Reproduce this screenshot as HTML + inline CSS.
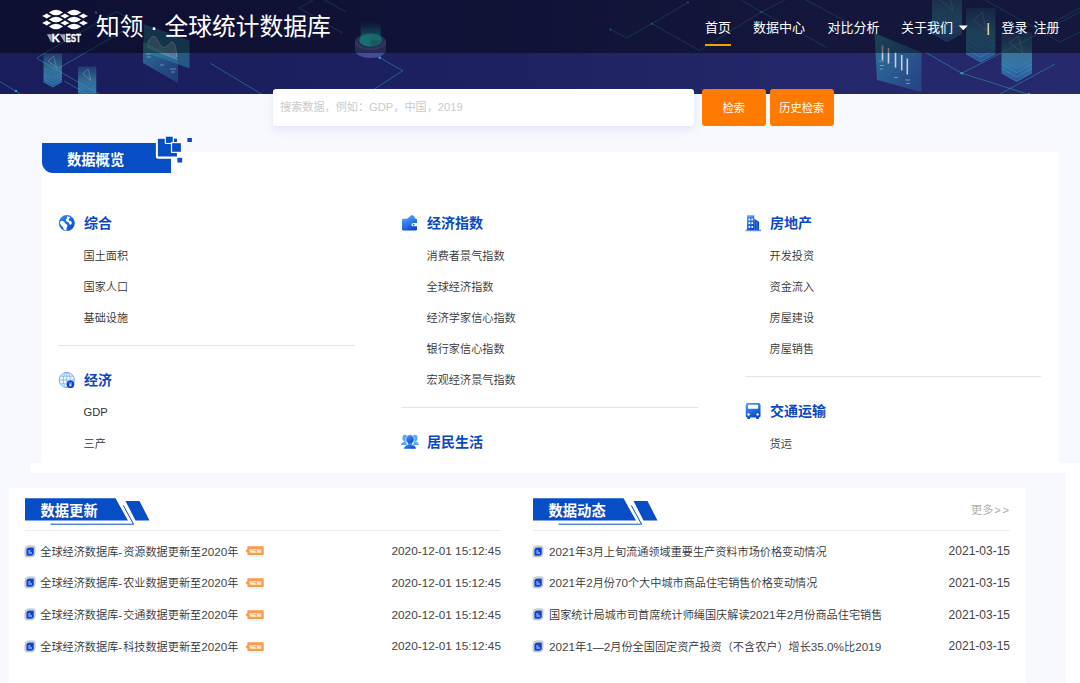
<!DOCTYPE html>
<html lang="zh-CN">
<head>
<meta charset="utf-8">
<title>知领 · 全球统计数据库</title>
<style>
*{box-sizing:border-box;margin:0;padding:0}
html,body{width:1080px;height:683px;overflow:hidden;background:#fff}
body{position:relative;font-family:"Liberation Sans","Noto Sans CJK SC",sans-serif;color:#333;font-size:11.15px}
.abs{position:absolute}
.l{font-size:11.7px;color:#444}
#bgA{left:0;top:94px;width:1080px;height:369px;background:#f8f9fe}
#bgB{left:0;top:463px;width:30px;height:10px;background:#f8f9fe}
#bgC{left:0;top:473px;width:1066px;height:210px;background:#f8f9fe}
#panel1{left:42px;top:152px;width:1017px;height:311px;background:#fff}
#panel2{left:9px;top:488px;width:1017px;height:195px;background:#fff}
#banner{left:0;top:0;width:1080px;height:94px;background:linear-gradient(90deg,#1a1d5c 0%,#1d2161 45%,#24286a 75%,#262a6c 100%);overflow:hidden}
#nav{left:0;top:0;width:1080px;height:53px;background:rgba(0,0,0,.44)}
#title{left:96px;top:9px;height:36px;line-height:36px;font-size:23.75px;color:#fff;font-weight:400;white-space:nowrap}
.nv{top:16px;height:24px;line-height:24px;font-size:13px;color:#fff;white-space:nowrap}
#uline{left:705px;top:43.5px;width:26px;height:2px;background:#f5a200}
#sbox{left:273px;top:89px;width:420.5px;height:36.5px;background:#fff;border-radius:3px;box-shadow:0 4px 10px rgba(90,130,190,.15)}
#sbox span{position:absolute;left:7px;top:0;line-height:37px;color:#cacaca;font-size:11.15px;white-space:nowrap}
.btn{top:89px;width:63.5px;height:36.5px;background:#ff7a00;border-radius:3px;color:#fff;text-align:center;line-height:38px;font-size:11.25px}
#tab1{left:42px;top:143px;width:129px;height:30px;background:#064dc6;border-radius:0 0 0 11px}
#tab1t{left:67px;top:148.5px;height:22px;line-height:22px;color:#fff;font-weight:bold;font-size:14.3px;white-space:nowrap}
.h{height:20px;line-height:20px;font-size:14px;font-weight:bold;color:#0a48c3;white-space:nowrap}
.it{height:16px;line-height:16px;font-size:11.15px;color:#333;white-space:nowrap;font-weight:350}
.hr{height:1px;background:#e4e4e4}
.row{height:16px;line-height:16px;white-space:nowrap;color:#333;font-weight:350}
.date{text-align:right;width:130px;font-size:11.8px;height:16px;line-height:16px;color:#444}
.sech{color:#fff;font-weight:bold;font-size:14.3px;line-height:22px;height:22px;white-space:nowrap}
</style>
</head>
<body>
<div class="abs" id="bgA"></div>
<div class="abs" id="bgB"></div>
<div class="abs" id="bgC"></div>
<div class="abs" id="panel1"></div>
<div class="abs" id="panel2"></div>

<!-- HEADER -->
<div class="abs" id="banner">
<svg id="deco" class="abs" style="left:0;top:0" width="1080" height="94" viewBox="0 0 1080 94">
<defs>
<linearGradient id="sg" x1="0" y1="0" x2="0" y2="1"><stop offset="0" stop-color="#3aa5b8" stop-opacity="0.22"/><stop offset="0.45" stop-color="#48b0c0" stop-opacity="0.55"/><stop offset="0.7" stop-color="#3a8fc0" stop-opacity="0.7"/><stop offset="1" stop-color="#2c62a8" stop-opacity="0.75"/></linearGradient>
<linearGradient id="pg" x1="0" y1="0" x2="1" y2="1"><stop offset="0" stop-color="#33a3b2" stop-opacity="0.8"/><stop offset="1" stop-color="#2a62a8" stop-opacity="0.5"/></linearGradient>
<linearGradient id="ug" x1="0" y1="0" x2="0" y2="1"><stop offset="0" stop-color="#2bc4c8" stop-opacity="0"/><stop offset="1" stop-color="#2bc4c8" stop-opacity=".75"/></linearGradient>
</defs>
<g fill="none" stroke="#2fb5c4" stroke-width="0.8" stroke-opacity=".55" stroke-linejoin="round">
<path d="M38 57L116.7 11.5L136.6 23.1L57.8 68.6Q56.1 69.6 54.4 68.6L38 59.1Q36.2 58 38 57Z"/>
<path d="M56.1 69.6L100 94.5M64.4 81.2L88 94.5"/>
<path d="M0 81.5L20.5 94"/>
<path d="M210.4 63.3L262 94.4"/>
<path d="M379.6 57.5L402.7 70.8L374.8 88.9L366 94"/>
<path d="M313 0L299.3 8L342.2 33M324.4 0L346 11.9"/>
<path d="M610.4 29.6L626.7 37.9L651.9 23.7L688 2.4M651.9 23.7L699.3 50.4L761.5 11.9L785 0M740.7 0L761.5 11.9L826.7 47.4M806 0L856 26.7"/>
<path d="M961.8 73.3L1080 12M961.8 73.3L1029 94.5M925 52L961.8 73.3"/>
<path d="M1000 94L1055 64M1040 30L1080 8"/>
<path d="M985 0L1060 42L1080 32"/>
</g>
<g fill="#2fc0cc" fill-opacity=".8"><circle cx="16" cy="91" r="1.2"/><circle cx="96" cy="12.5" r="1.2"/><circle cx="379.6" cy="57.6" r="1.3"/><circle cx="961.8" cy="73.3" r="1.3"/><circle cx="610.4" cy="29.6" r="1"/><circle cx="651.9" cy="23.7" r="1"/><circle cx="688" cy="2.4" r="1"/><circle cx="761.5" cy="11.9" r="1"/><circle cx="1029" cy="94" r="1.2"/></g>
<g opacity="1"><path d="M43.5 53.5H62V81.8L52.75 87L43.5 81.8Z" fill="url(#sg)"/><path d="M43.5 81.8L52.75 87L62 81.8" fill="none" stroke="#4db6d6" stroke-opacity="0.5" stroke-width="0.8"/><path d="M43.5 78.8L52.75 84L62 78.8" fill="none" stroke="#4db6d6" stroke-opacity="0.42" stroke-width="0.8"/><path d="M43.5 75.8L52.75 81L62 75.8" fill="none" stroke="#4db6d6" stroke-opacity="0.34" stroke-width="0.8"/><path d="M43.5 72.8L52.75 78L62 72.8" fill="none" stroke="#4db6d6" stroke-opacity="0.26" stroke-width="0.8"/><path d="M48.1 60.9L53.7 56.2L56.5 67.6L48.1 60.9" fill="none" stroke="#c9d6e6" stroke-opacity=".55" stroke-width="0.5"/></g><g opacity="1"><path d="M78 66.5H96.3V93.9L87.15 99L78 93.9Z" fill="url(#sg)"/><path d="M78 93.9L87.15 99L96.3 93.9" fill="none" stroke="#4db6d6" stroke-opacity="0.5" stroke-width="0.8"/><path d="M78 91L87.15 96.1L96.3 91" fill="none" stroke="#4db6d6" stroke-opacity="0.42" stroke-width="0.8"/><path d="M78 88L87.15 93.2L96.3 88" fill="none" stroke="#4db6d6" stroke-opacity="0.34" stroke-width="0.8"/><path d="M78 85.1L87.15 90.2L96.3 85.1" fill="none" stroke="#4db6d6" stroke-opacity="0.26" stroke-width="0.8"/><path d="M82.6 73.7L88.1 69.1L90.8 80.2L82.6 73.7" fill="none" stroke="#c9d6e6" stroke-opacity=".55" stroke-width="0.5"/></g><path d="M143.7 24L189.6 40.4V68.5L143.7 52Z" fill="#2f93a8" opacity=".5"/><path d="M143 42L178 59V83L143 63Z" fill="url(#pg)" opacity=".8"/><path d="M147 44Q153 30 158 41T169 44T177 57L177 60L147 48Z" fill="#cfe2f5" fill-opacity=".25"/><path d="M147 44Q153 30 158 41T169 44T177 57" fill="none" stroke="#bfe6f2" stroke-opacity=".5" stroke-width="0.8"/><path d="M146 54h5M147 57h4M160 65h4M170 69h6M171 72h4" stroke="#d7ecf7" stroke-opacity=".6" stroke-width="0.7"/><path d="M355 42V50A15.5 8 0 0 0 386 50V42Z" fill="#4b54a6" fill-opacity=".85"/><ellipse cx="370.5" cy="42" rx="15.5" ry="8" fill="#6068b4" fill-opacity=".8"/><ellipse cx="370.5" cy="41" rx="13" ry="7" fill="#3c4590" fill-opacity=".9"/><ellipse cx="370.7" cy="40.2" rx="11.5" ry="6.6" fill="#2bc4c8"/><path d="M370.7 33.6A11.5 6.6 0 0 1 370.7 46.8Z" fill="#2f8f9a" fill-opacity=".6"/><path d="M360.7 22H380.7V40H360.7Z" fill="url(#ug)"/><path d="M874.5 33L921.5 52.5V92L877 80Z" fill="url(#pg)" opacity=".85"/><path d="M882.5 45.5V60" stroke="#e6dff0" stroke-opacity=".85" stroke-width="1.6"/><path d="M888.5 48V63.5" stroke="#e6dff0" stroke-opacity=".85" stroke-width="1.6"/><path d="M895.5 52.5V67.5" stroke="#e6dff0" stroke-opacity=".85" stroke-width="1.6"/><path d="M901.7 55V70.5" stroke="#e6dff0" stroke-opacity=".85" stroke-width="1.6"/><path d="M907.3 58.5V74.5" stroke="#e6dff0" stroke-opacity=".85" stroke-width="1.6"/><path d="M879 61h5M880 65.5h4M880 69h3M894 77.5h4M905 80h5M906 83.5h4" stroke="#d7ecf7" stroke-opacity=".6" stroke-width="0.7"/><g opacity="0.9"><path d="M932 -12H962V33.3L947 41.7L932 33.3Z" fill="url(#sg)"/><path d="M932 33.3L947 41.7L962 33.3" fill="none" stroke="#4db6d6" stroke-opacity="0.5" stroke-width="0.8"/><path d="M932 28.5L947 36.9L962 28.5" fill="none" stroke="#4db6d6" stroke-opacity="0.42" stroke-width="0.8"/><path d="M932 23.6L947 32L962 23.6" fill="none" stroke="#4db6d6" stroke-opacity="0.34" stroke-width="0.8"/><path d="M932 18.8L947 27.2L962 18.8" fill="none" stroke="#4db6d6" stroke-opacity="0.26" stroke-width="0.8"/><path d="M939.5 -0.2L948.5 -7.7L953 10.6L939.5 -0.2" fill="none" stroke="#c9d6e6" stroke-opacity=".55" stroke-width="0.5"/></g><g opacity="0.95"><path d="M966 8H995.4V53.8L980.7 62L966 53.8Z" fill="url(#sg)"/><path d="M966 53.8L980.7 62L995.4 53.8" fill="none" stroke="#4db6d6" stroke-opacity="0.5" stroke-width="0.8"/><path d="M966 48.9L980.7 57.1L995.4 48.9" fill="none" stroke="#4db6d6" stroke-opacity="0.42" stroke-width="0.8"/><path d="M966 44L980.7 52.3L995.4 44" fill="none" stroke="#4db6d6" stroke-opacity="0.34" stroke-width="0.8"/><path d="M966 39.2L980.7 47.4L995.4 39.2" fill="none" stroke="#4db6d6" stroke-opacity="0.26" stroke-width="0.8"/><path d="M973.4 19.9L982.2 12.3L986.6 30.7L973.4 19.9" fill="none" stroke="#c9d6e6" stroke-opacity=".55" stroke-width="0.5"/></g><g opacity="1"><path d="M1001.5 32H1032V73L1016.75 81.5L1001.5 73Z" fill="url(#sg)"/><path d="M1001.5 73L1016.75 81.5L1032 73" fill="none" stroke="#4db6d6" stroke-opacity="0.5" stroke-width="0.8"/><path d="M1001.5 68.5L1016.75 77L1032 68.5" fill="none" stroke="#4db6d6" stroke-opacity="0.42" stroke-width="0.8"/><path d="M1001.5 64L1016.75 72.6L1032 64" fill="none" stroke="#4db6d6" stroke-opacity="0.34" stroke-width="0.8"/><path d="M1001.5 59.6L1016.75 68.1L1032 59.6" fill="none" stroke="#4db6d6" stroke-opacity="0.26" stroke-width="0.8"/><path d="M1009.1 42.9L1018.3 36L1022.9 52.8L1009.1 42.9" fill="none" stroke="#c9d6e6" stroke-opacity=".55" stroke-width="0.5"/></g></svg>
</div>
<div class="abs" id="nav"></div>
<svg id="logo" class="abs" style="left:40px;top:8px" width="52" height="38" viewBox="40 8 52 38">
<path d="M48.9 12.5Q56 7 63.1 12.5Q56 18 48.9 12.5ZM67 12.5Q74.1 7 81.2 12.5Q74.1 18 67 12.5ZM48.9 19.5Q56 14 63.1 19.5Q56 25 48.9 19.5ZM67 19.5Q74.1 14 81.2 19.5Q74.1 25 67 19.5ZM48.9 26.6Q56 21.1 63.1 26.6Q56 32.1 48.9 26.6ZM67 26.6Q74.1 21.1 81.2 26.6Q74.1 32.1 67 26.6ZM42.1 16Q45.09 14.62 46.7 13.5Q48.31 14.62 51.3 16Q48.31 17.38 46.7 18.5Q45.09 17.38 42.1 16ZM60.3 16Q63.29 14.62 64.9 13.5Q66.51 14.62 69.5 16Q66.51 17.38 64.9 18.5Q63.29 17.38 60.3 16ZM78.8 16Q81.79 14.62 83.4 13.5Q85.01 14.62 88 16Q85.01 17.38 83.4 18.5Q81.79 17.38 78.8 16ZM42.1 23.1Q45.09 21.73 46.7 20.6Q48.31 21.73 51.3 23.1Q48.31 24.48 46.7 25.6Q45.09 24.48 42.1 23.1ZM60.3 23.1Q63.29 21.73 64.9 20.6Q66.51 21.73 69.5 23.1Q66.51 24.48 64.9 25.6Q63.29 24.48 60.3 23.1ZM78.8 23.1Q81.79 21.73 83.4 20.6Q85.01 21.73 88 23.1Q85.01 24.48 83.4 25.6Q81.79 24.48 78.8 23.1Z" fill="#fff"/>
<path d="M47 34.2H51.6V41.8H50.8Z" fill="#fff" opacity=".62"/>
<path d="M59.6 34.2H65V41.8H64.2Z" fill="#fff" opacity=".62"/>
<g font-family="Liberation Sans, sans-serif" font-weight="bold" fill="#fff" stroke="#fff" stroke-width="0.3" font-size="10.5">
<text x="51.4" y="41.8" textLength="8.4" lengthAdjust="spacingAndGlyphs">K</text>
<text x="65.4" y="41.8" textLength="15.6" lengthAdjust="spacingAndGlyphs">EST</text>
</g>
</svg>
<div class="abs" id="title">知领 · 全球统计数据库</div>
<div class="abs nv" style="left:705px">首页</div>
<div class="abs nv" style="left:753px">数据中心</div>
<div class="abs nv" style="left:827.5px">对比分析</div>
<div class="abs nv" style="left:901px">关于我们</div>
<svg class="abs" style="left:958px;top:25px" width="11" height="6" viewBox="0 0 11 6"><path d="M0.8 0.6h9L5.3 5.3z" fill="#fff"/></svg>
<div class="abs nv" style="left:986.5px">|</div>
<div class="abs nv" style="left:1001.5px">登录</div>
<div class="abs nv" style="left:1033.5px">注册</div>
<div class="abs" id="uline"></div>

<!-- SEARCH -->
<div class="abs" id="sbox"><span>搜索数据，例如：GDP，中国，2019</span></div>
<div class="abs btn" style="left:702px">检索</div>
<div class="abs btn" style="left:770px">历史检索</div>

<!-- TAB -->
<div class="abs" id="tab1"></div>
<div class="abs" id="tab1t">数据概览</div>
<svg id="pix" class="abs" style="left:150px;top:130px" width="50" height="40" viewBox="150 130 50 40">
<g fill="#064dc6">
<rect x="155.9" y="137" width="23" height="21.7" rx="2" fill="#fff"/>
<rect x="157.9" y="138.8" width="19" height="17.8" rx="0.4"/>
<rect x="164.7" y="135.5" width="9.2" height="8.6" rx="1" fill="#fff"/>
<rect x="165.9" y="136.7" width="6.8" height="6.2"/>
<rect x="170.9" y="142" width="11.2" height="11" rx="1" fill="#fff"/>
<rect x="172.1" y="143.2" width="8.8" height="8.6"/>
<rect x="174" y="138.8" width="2.9" height="2.6"/>
<rect x="187.4" y="138" width="4.5" height="4"/>
<rect x="177.4" y="157.8" width="4.8" height="4.7"/>
</g></svg>

<!-- CATEGORIES -->
<div id="cats" class="abs" style="left:0;top:152px;width:1080px;height:296.7px;overflow:hidden"><div class="abs" style="left:0;top:-152px;width:1080px;height:600px">
<div class="abs h" style="left:84px;top:213.40px">综合</div>
<div class="abs it" style="left:83.6px;top:248.10px">国土面积</div>
<div class="abs it" style="left:83.6px;top:279.04px">国家人口</div>
<div class="abs it" style="left:83.6px;top:309.98px">基础设施</div>
<div class="abs hr" style="left:58px;top:345px;width:297px"></div>
<div class="abs h" style="left:84px;top:370.40px">经济</div>
<div class="abs it" style="left:83.6px;top:404.10px">GDP</div>
<div class="abs it" style="left:83.6px;top:436.04px">三产</div>
<div class="abs h" style="left:427px;top:213.40px">经济指数</div>
<div class="abs it" style="left:426.6px;top:248.10px">消费者景气指数</div>
<div class="abs it" style="left:426.6px;top:279.04px">全球经济指数</div>
<div class="abs it" style="left:426.6px;top:309.98px">经济学家信心指数</div>
<div class="abs it" style="left:426.6px;top:340.92px">银行家信心指数</div>
<div class="abs it" style="left:426.6px;top:371.86px">宏观经济景气指数</div>
<div class="abs hr" style="left:401px;top:407px;width:297px"></div>
<div class="abs h" style="left:427px;top:432.40px">居民生活</div>
<div class="abs h" style="left:770px;top:213.40px">房地产</div>
<div class="abs it" style="left:769.6px;top:248.10px">开发投资</div>
<div class="abs it" style="left:769.6px;top:279.04px">资金流入</div>
<div class="abs it" style="left:769.6px;top:309.98px">房屋建设</div>
<div class="abs it" style="left:769.6px;top:340.92px">房屋销售</div>
<div class="abs hr" style="left:745px;top:376px;width:296px"></div>
<div class="abs h" style="left:770px;top:401.10px">交通运输</div>
<div class="abs it" style="left:769.6px;top:435.80px">货运</div>
</div></div>
<svg class="abs" style="left:0;top:0;pointer-events:none" width="1080" height="470" viewBox="0 0 1080 470">
<defs>
<linearGradient id="g1" x1="0" y1="0" x2="1" y2="1"><stop offset="0" stop-color="#2f8df6"/><stop offset="1" stop-color="#0846cf"/></linearGradient>
<linearGradient id="g2" x1="0" y1="0" x2="0.6" y2="1"><stop offset="0" stop-color="#4fa3f8"/><stop offset="1" stop-color="#0a49d0"/></linearGradient>
</defs>
<!-- globe -->
<g transform="translate(66.8 223.1)">
<circle r="8" fill="url(#g1)"/>
<path d="M-6.9 -1.2C-6.2 -2 -5 -2.4 -3.8 -2C-2.6 -1.6 -2.4 -0.4 -1.4 0.4C-0.4 1.2 0.6 1.6 0.6 2.8C0.6 4 -0.4 4.6 -0.4 5.6C-0.4 6.4 0 7 0.4 7.4C-1 7.4 -2.2 7 -3.2 6.2C-3.2 5 -3.8 4 -4.6 3.2C-5.6 2.2 -6.9 0.8 -6.9 -1.2Z" fill="#fff"/>
<path d="M0.2 -6.6C1.4 -6.8 2.6 -6.4 3.6 -5.8C3 -5 2 -4.8 1.8 -3.8C1.6 -2.8 2.6 -2.4 3.4 -2C4.4 -1.6 5.2 -1 5 0.2C4.8 1.4 3.8 2 3 1.4C2.2 0.8 2.4 -0.2 1.6 -0.8C0.8 -1.4 -0.4 -1.4 -0.8 -2.4C-1.2 -3.4 -0.4 -4.2 0.2 -4.8C0.6 -5.4 0 -6 0.2 -6.6Z" fill="#fff"/>
</g>
<!-- globe grid + yen -->
<g transform="translate(66.8 380)">
<circle r="7.6" fill="#f1f7ff" stroke="#5ea4f5" stroke-width="0.9"/>
<g fill="none" stroke="#6aaaf5" stroke-width="0.75">
<ellipse rx="3.6" ry="7.6"/><path d="M0 -7.6V7.6M-7.6 0H7.6M-6.6 -3.8H6.6M-6.6 3.8H6.6"/>
</g>
<circle cx="3.6" cy="4.2" r="4.6" fill="#fff"/>
<circle cx="3.6" cy="4.2" r="3.9" fill="#0a45cc"/>
<path d="M2.2 2.2L3.6 4.3L5 2.2M3.6 4.3V6.6M2.3 4.6H4.9M2.3 5.6H4.9" stroke="#fff" stroke-width="0.6" fill="none"/>
</g>
<!-- wallet -->
<g transform="translate(402 215)">
<path d="M4.8 3.9L9.8 0L11.6 0.8L13.6 3.9Z" fill="#3f8ff0"/>
<path d="M0 5Q0 3.7 1.3 3.7H13.7Q15 3.7 15 5V8H11.4Q9.4 8 9.4 9.7Q9.4 11.3 11.4 11.3H15V14.4Q15 15.4 13.7 15.4H1.3Q0 15.4 0 14.4Z" fill="url(#g2)"/>
<circle cx="11.6" cy="9.7" r="0.9" fill="#1a62e0"/>
</g>
<!-- people -->
<g transform="translate(401 434.6)">
<g fill="#5aa9f8">
<ellipse cx="3.9" cy="3.5" rx="2.5" ry="3.3"/>
<path d="M0 10.4C0 8.4 1.6 8 2.8 7.2L5 6.4L6 10.4Z"/>
<ellipse cx="14.1" cy="3.5" rx="2.5" ry="3.3"/>
<path d="M18 10.4C18 8.4 16.4 8 15.2 7.2L13 6.4L12 10.4Z"/>
</g>
<g fill="url(#g2)" stroke="#fff" stroke-width="0.6">
<path d="M2.8 14.5C2.8 11.4 5 10.8 6.6 10C7.4 9.6 7.4 9 7.2 8.4H10.8C10.6 9 10.6 9.6 11.4 10C13 10.8 15.2 11.4 15.2 14.5Z"/>
<ellipse cx="9" cy="4.7" rx="4.2" ry="4.6"/>
</g>
<path d="M7 8.2H11V9.4H7Z" fill="#2f80ea"/>
</g>
<!-- building -->
<g transform="translate(745.5 215)">
<path d="M1.5 0.2H8.8V15H1.5Z" fill="url(#g2)"/>
<path d="M8.8 3.8L13.6 6.8V15H8.8Z" fill="#0b4bd0"/>
<path d="M11.4 5.6V15" stroke="#7fb2f5" stroke-width="0.5"/>
<path d="M0 14.7H15.5V16.2H0Z" fill="#2a6fe3" opacity=".75"/>
<g fill="#fff"><rect x="3" y="3.6" width="1.7" height="1.8"/><rect x="5.9" y="3.6" width="1.7" height="1.8"/><rect x="3" y="7.2" width="1.7" height="1.8"/><rect x="5.9" y="7.2" width="1.7" height="1.8"/><rect x="3" y="11" width="1.7" height="1.8"/><rect x="5.9" y="11" width="1.7" height="1.8"/></g>
<path d="M1.5 0.2H8.8V1.4H1.5Z" fill="#9ccafc" opacity=".7"/>
</g>
<!-- bus -->
<g transform="translate(745.7 403)">
<path d="M1.6 13.5H4.4V15.2Q4.4 15.9 3.7 15.9H2.3Q1.6 15.9 1.6 15.2ZM10.4 13.5H13.2V15.2Q13.2 15.9 12.5 15.9H11.1Q10.4 15.9 10.4 15.2Z" fill="#0a46cd"/>
<path d="M0 2.2Q0 0 2.2 0H12.6Q14.8 0 14.8 2.2V13Q14.8 14.4 13.4 14.4H1.4Q0 14.4 0 13Z" fill="url(#g2)"/>
<rect x="2.3" y="1.8" width="10.2" height="3.9" rx="0.6" fill="#fff"/>
<circle cx="2.9" cy="11.4" r="1.2" fill="#fff"/><circle cx="11.9" cy="11.4" r="1.2" fill="#fff"/>
</g>
</svg>


<!-- BOTTOM -->
<div id="bottom">
<svg class="abs" style="left:25px;top:497px" width="130" height="30" viewBox="0 0 130 30"><path d="M0 1.3H90.5L103 23.5H0Z" fill="#064dc6"/><path d="M100.5 4H114.5L124.5 23.5H110.5Z" fill="#064dc6"/><path d="M25.5 27.2H108.6L98.3 8.4" fill="none" stroke="#064dc6" stroke-width="1"/></svg>
<div class="abs sech" style="left:40.5px;top:500px">数据更新</div>
<div class="abs hr" style="left:25px;top:530px;width:476px;background:#ececec"></div>
<svg class="abs" style="left:23.6px;top:544.6px" width="12" height="13" viewBox="0 0 12 13"><path d="M4.7 1H9.5Q10.9 1 10.9 2.4V8.200000000000001Q10.9 11.8 7.300000000000001 11.8H2.5Q1.1 11.8 1.1 10.4V4.6Q1.1 1 4.7 1Z" fill="#ece9e3" stroke="#a4a6ad" stroke-width="0.8"/><path d="M5.199999999999999 2.5H9Q9.8 2.5 9.8 3.3V8Q9.8 10.8 7.000000000000001 10.8H3.2Q2.4 10.8 2.4 10V5.3Q2.4 2.5 5.199999999999999 2.5Z" fill="#0a45d2"/><path d="M4.3 6h2.1M4.3 8h3.7" stroke="#fff" stroke-width="0.9" fill="none"/></svg>
<div class="abs row" style="left:40.3px;top:543.6px">全球经济数据库<span class="l" style="letter-spacing:1px">-</span>资源数据更新至<span class="l">2020</span>年</div>
<svg class="abs" style="left:244.7px;top:546.2px" width="20" height="10" viewBox="0 0 20 10"><path d="M2.4 0.3H18.7V9H2.4V6.4L0.3 4.700L2.400 3Z" fill="#f89a52"/><text x="10.600" y="6.600" font-family="Liberation Sans, sans-serif" font-size="5.200" font-weight="bold" fill="#fff" text-anchor="middle">NEW</text></svg>
<div class="abs date" style="left:371px;top:543.0px">2020-12-01 15:12:45</div>
<svg class="abs" style="left:23.6px;top:576.4px" width="12" height="13" viewBox="0 0 12 13"><path d="M4.7 1H9.5Q10.9 1 10.9 2.4V8.200000000000001Q10.9 11.8 7.300000000000001 11.8H2.5Q1.1 11.8 1.1 10.4V4.6Q1.1 1 4.7 1Z" fill="#ece9e3" stroke="#a4a6ad" stroke-width="0.8"/><path d="M5.199999999999999 2.5H9Q9.8 2.5 9.8 3.3V8Q9.8 10.8 7.000000000000001 10.8H3.2Q2.4 10.8 2.4 10V5.3Q2.4 2.5 5.199999999999999 2.5Z" fill="#0a45d2"/><path d="M4.3 6h2.1M4.3 8h3.7" stroke="#fff" stroke-width="0.9" fill="none"/></svg>
<div class="abs row" style="left:40.3px;top:575.4px">全球经济数据库<span class="l" style="letter-spacing:1px">-</span>农业数据更新至<span class="l">2020</span>年</div>
<svg class="abs" style="left:244.7px;top:578.0px" width="20" height="10" viewBox="0 0 20 10"><path d="M2.4 0.3H18.7V9H2.4V6.4L0.3 4.700L2.400 3Z" fill="#f89a52"/><text x="10.600" y="6.600" font-family="Liberation Sans, sans-serif" font-size="5.200" font-weight="bold" fill="#fff" text-anchor="middle">NEW</text></svg>
<div class="abs date" style="left:371px;top:574.8px">2020-12-01 15:12:45</div>
<svg class="abs" style="left:23.6px;top:608.2px" width="12" height="13" viewBox="0 0 12 13"><path d="M4.7 1H9.5Q10.9 1 10.9 2.4V8.200000000000001Q10.9 11.8 7.300000000000001 11.8H2.5Q1.1 11.8 1.1 10.4V4.6Q1.1 1 4.7 1Z" fill="#ece9e3" stroke="#a4a6ad" stroke-width="0.8"/><path d="M5.199999999999999 2.5H9Q9.8 2.5 9.8 3.3V8Q9.8 10.8 7.000000000000001 10.8H3.2Q2.4 10.8 2.4 10V5.3Q2.4 2.5 5.199999999999999 2.5Z" fill="#0a45d2"/><path d="M4.3 6h2.1M4.3 8h3.7" stroke="#fff" stroke-width="0.9" fill="none"/></svg>
<div class="abs row" style="left:40.3px;top:607.2px">全球经济数据库<span class="l" style="letter-spacing:1px">-</span>交通数据更新至<span class="l">2020</span>年</div>
<svg class="abs" style="left:244.7px;top:609.8px" width="20" height="10" viewBox="0 0 20 10"><path d="M2.4 0.3H18.7V9H2.4V6.4L0.3 4.700L2.400 3Z" fill="#f89a52"/><text x="10.600" y="6.600" font-family="Liberation Sans, sans-serif" font-size="5.200" font-weight="bold" fill="#fff" text-anchor="middle">NEW</text></svg>
<div class="abs date" style="left:371px;top:606.6px">2020-12-01 15:12:45</div>
<svg class="abs" style="left:23.6px;top:639.9px" width="12" height="13" viewBox="0 0 12 13"><path d="M4.7 1H9.5Q10.9 1 10.9 2.4V8.200000000000001Q10.9 11.8 7.300000000000001 11.8H2.5Q1.1 11.8 1.1 10.4V4.6Q1.1 1 4.7 1Z" fill="#ece9e3" stroke="#a4a6ad" stroke-width="0.8"/><path d="M5.199999999999999 2.5H9Q9.8 2.5 9.8 3.3V8Q9.8 10.8 7.000000000000001 10.8H3.2Q2.4 10.8 2.4 10V5.3Q2.4 2.5 5.199999999999999 2.5Z" fill="#0a45d2"/><path d="M4.3 6h2.1M4.3 8h3.7" stroke="#fff" stroke-width="0.9" fill="none"/></svg>
<div class="abs row" style="left:40.3px;top:638.9px">全球经济数据库<span class="l" style="letter-spacing:1px">-</span>科技数据更新至<span class="l">2020</span>年</div>
<svg class="abs" style="left:244.7px;top:641.5px" width="20" height="10" viewBox="0 0 20 10"><path d="M2.4 0.3H18.7V9H2.4V6.4L0.3 4.700L2.400 3Z" fill="#f89a52"/><text x="10.600" y="6.600" font-family="Liberation Sans, sans-serif" font-size="5.200" font-weight="bold" fill="#fff" text-anchor="middle">NEW</text></svg>
<div class="abs date" style="left:371px;top:638.3px">2020-12-01 15:12:45</div>
<svg class="abs" style="left:533px;top:497px" width="130" height="30" viewBox="0 0 130 30"><path d="M0 1.3H90.5L103 23.5H0Z" fill="#064dc6"/><path d="M100.5 4H114.5L124.5 23.5H110.5Z" fill="#064dc6"/><path d="M25.5 27.2H108.6L98.3 8.4" fill="none" stroke="#064dc6" stroke-width="1"/></svg>
<div class="abs sech" style="left:548.5px;top:500px">数据动态</div>
<div class="abs hr" style="left:533px;top:530px;width:477px;background:#ececec"></div>
<div class="abs row" style="left:971px;top:502px;color:#a8a8a8">更多<span style="letter-spacing:1.6px;margin-left:1px">&gt;&gt;</span></div>
<svg class="abs" style="left:531.6px;top:544.6px" width="12" height="13" viewBox="0 0 12 13"><path d="M4.7 1H9.5Q10.9 1 10.9 2.4V8.200000000000001Q10.9 11.8 7.300000000000001 11.8H2.5Q1.1 11.8 1.1 10.4V4.6Q1.1 1 4.7 1Z" fill="#ece9e3" stroke="#a4a6ad" stroke-width="0.8"/><path d="M5.199999999999999 2.5H9Q9.8 2.5 9.8 3.3V8Q9.8 10.8 7.000000000000001 10.8H3.2Q2.4 10.8 2.4 10V5.3Q2.4 2.5 5.199999999999999 2.5Z" fill="#0a45d2"/><path d="M4.3 6h2.1M4.3 8h3.7" stroke="#fff" stroke-width="0.9" fill="none"/></svg>
<div class="abs row" style="left:549px;top:543.6px"><span class="l">2021</span>年<span class="l">3</span>月上旬流通领域重要生产资料市场价格变动情况</div>
<div class="abs date" style="left:880px;top:543.0px;font-size:12px">2021-03-15</div>
<svg class="abs" style="left:531.6px;top:576.4px" width="12" height="13" viewBox="0 0 12 13"><path d="M4.7 1H9.5Q10.9 1 10.9 2.4V8.200000000000001Q10.9 11.8 7.300000000000001 11.8H2.5Q1.1 11.8 1.1 10.4V4.6Q1.1 1 4.7 1Z" fill="#ece9e3" stroke="#a4a6ad" stroke-width="0.8"/><path d="M5.199999999999999 2.5H9Q9.8 2.5 9.8 3.3V8Q9.8 10.8 7.000000000000001 10.8H3.2Q2.4 10.8 2.4 10V5.3Q2.4 2.5 5.199999999999999 2.5Z" fill="#0a45d2"/><path d="M4.3 6h2.1M4.3 8h3.7" stroke="#fff" stroke-width="0.9" fill="none"/></svg>
<div class="abs row" style="left:549px;top:575.4px"><span class="l">2021</span>年<span class="l">2</span>月份<span class="l">70</span>个大中城市商品住宅销售价格变动情况</div>
<div class="abs date" style="left:880px;top:574.8px;font-size:12px">2021-03-15</div>
<svg class="abs" style="left:531.6px;top:608.2px" width="12" height="13" viewBox="0 0 12 13"><path d="M4.7 1H9.5Q10.9 1 10.9 2.4V8.200000000000001Q10.9 11.8 7.300000000000001 11.8H2.5Q1.1 11.8 1.1 10.4V4.6Q1.1 1 4.7 1Z" fill="#ece9e3" stroke="#a4a6ad" stroke-width="0.8"/><path d="M5.199999999999999 2.5H9Q9.8 2.5 9.8 3.3V8Q9.8 10.8 7.000000000000001 10.8H3.2Q2.4 10.8 2.4 10V5.3Q2.4 2.5 5.199999999999999 2.5Z" fill="#0a45d2"/><path d="M4.3 6h2.1M4.3 8h3.7" stroke="#fff" stroke-width="0.9" fill="none"/></svg>
<div class="abs row" style="left:549px;top:607.2px">国家统计局城市司首席统计师绳国庆解读<span class="l">2021</span>年<span class="l">2</span>月份商品住宅销售</div>
<div class="abs date" style="left:880px;top:606.6px;font-size:12px">2021-03-15</div>
<svg class="abs" style="left:531.6px;top:639.9px" width="12" height="13" viewBox="0 0 12 13"><path d="M4.7 1H9.5Q10.9 1 10.9 2.4V8.200000000000001Q10.9 11.8 7.300000000000001 11.8H2.5Q1.1 11.8 1.1 10.4V4.6Q1.1 1 4.7 1Z" fill="#ece9e3" stroke="#a4a6ad" stroke-width="0.8"/><path d="M5.199999999999999 2.5H9Q9.8 2.5 9.8 3.3V8Q9.8 10.8 7.000000000000001 10.8H3.2Q2.4 10.8 2.4 10V5.3Q2.4 2.5 5.199999999999999 2.5Z" fill="#0a45d2"/><path d="M4.3 6h2.1M4.3 8h3.7" stroke="#fff" stroke-width="0.9" fill="none"/></svg>
<div class="abs row" style="left:549px;top:638.9px"><span class="l">2021</span>年<span class="l">1</span>—<span class="l">2</span>月份全国固定资产投资（不含农户）增长<span class="l">35.0%</span>比<span class="l">2019</span></div>
<div class="abs date" style="left:880px;top:638.3px;font-size:12px">2021-03-15</div>
</div>
</body>
</html>
